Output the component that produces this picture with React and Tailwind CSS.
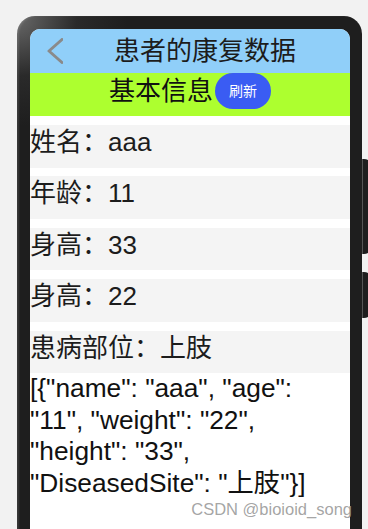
import { useState } from "react";

export default function App() {
  // ===================== STATE =====================
  const [patient] = useState({
    name: "aaa",
    age: "11",
    weight: "22",
    height: "33",
    DiseasedSite: "上肢",
  });

  const rows = [
    { label: "姓名", value: patient.name },
    { label: "年龄", value: patient.age },
    { label: "身高", value: patient.height },
    { label: "身高", value: patient.weight },
    { label: "患病部位", value: patient.DiseasedSite },
  ];

  const json = `[{"name": "${patient.name}", "age": "${patient.age}", "weight": "${patient.weight}", "height": "${patient.height}", "DiseasedSite": "${patient.DiseasedSite}"}]`;

  // ===================== UI =====================
  return (
    <div className="relative h-[529px] w-[368px] overflow-hidden bg-[#f2f2f2] font-['Liberation_Sans','Noto_Sans_CJK_SC',sans-serif] text-[#1a1a1a]">
      <div className="flex items-start pl-[17px] pt-[16px]">
        {/* PHONE FRAME */}
        <div className="h-[560px] w-[345px] shrink-0 rounded-[18px] bg-[radial-gradient(circle_at_0%_0%,#6a6a6a_0px,#2a2a2a_60px,#1e1e1e_110px)] pl-[13px] pr-[12px] pt-[13px] shadow-[inset_2px_0_2px_rgba(255,255,255,0.12)]">
          <div className="h-full overflow-hidden rounded-t-[10px] bg-white">
            {/* HEADER */}
            <div className="flex h-[44px] items-center bg-[#90cff9]">
              <svg
                className="ml-[17px] shrink-0"
                width="16"
                height="26"
                viewBox="0 0 16 26"
                fill="none"
              >
                <path
                  d="M15 1.5 L2 13 L15 24.5"
                  stroke="#8a8a8a"
                  strokeWidth="3"
                  strokeLinecap="round"
                  strokeLinejoin="round"
                />
              </svg>
              <div className="flex-1 pr-[3px] text-center text-[26px] leading-[34px] text-[#1c1c1c]">
                患者的康复数据
              </div>
            </div>

            {/* BASIC INFO */}
            <div className="flex h-[43px] items-start justify-center bg-[#adff2f]">
              <span className="text-[26px] leading-[36px] text-[#111]">基本信息</span>
              <button className="ml-[2px] h-[36px] w-[56px] rounded-full bg-[#3a5cf3] text-[14px] leading-[36px] text-white">
                刷新
              </button>
            </div>

            {/* ROWS */}
            <div className="flex flex-col gap-[8.8px] pt-[9px]">
              {rows.map((r, i) => (
                <div key={i} className="h-[42.6px] bg-[#f4f4f4] text-[26px] leading-[35px] text-[#1c1c1c]">
                  {r.label}：{r.value}
                </div>
              ))}
            </div>

            {/* RAW JSON */}
            <div className="text-[26.3px] leading-[31.5px] text-[#111]">{json}</div>
          </div>
        </div>

        {/* SIDE BUTTONS */}
        <div className="flex flex-col pt-[143px]">
          <div className="h-[95px] w-[10px] rounded-r-[8px] border-l border-[#555] bg-[#1e1e1e]" />
          <div className="mt-[18px] h-[46px] w-[10px] rounded-r-[8px] border-l border-[#555] bg-[#1e1e1e]" />
        </div>
      </div>

      {/* WATERMARK */}
      <div className="absolute right-[16px] top-[499px] text-[16.5px] leading-[20px] text-[#9a9a9a]/90">
        CSDN @bioioid_song
      </div>
    </div>
  );
}
